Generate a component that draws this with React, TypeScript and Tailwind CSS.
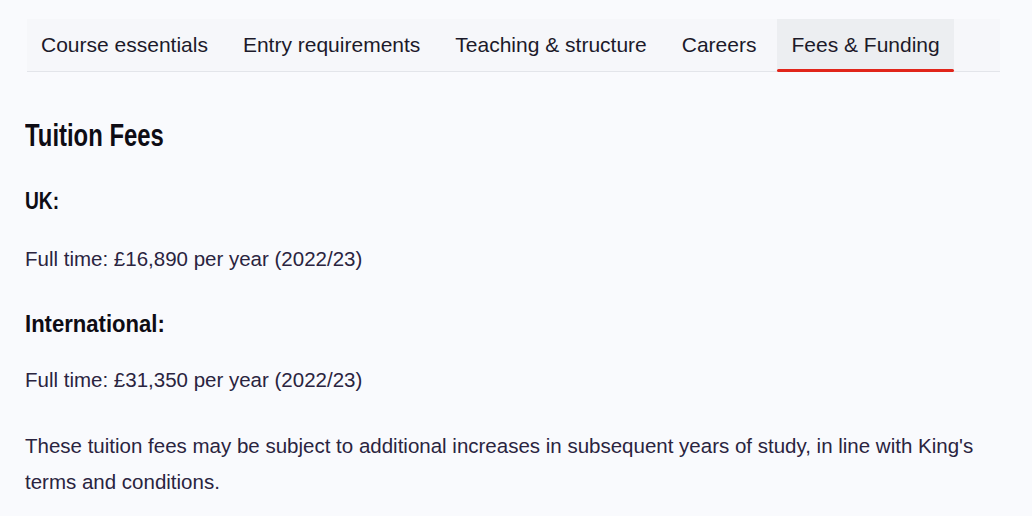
import React from 'react';

const tabs = ['Course essentials', 'Entry requirements', 'Teaching & structure', 'Careers', 'Fees & Funding'];

const body = { fontFamily: '"Liberation Sans", Arial, sans-serif' };

export default function App() {
  const active = 4;

  return (
    <div className="w-[1032px] h-[516px] bg-[#f9fafd] overflow-hidden text-[#2a2440]" style={body}>
      {/* tab bar */}
      <div className="pt-[19px] pl-[27px] pr-[32px]">
        <div className="flex gap-[7px] h-[53px] bg-[#f6f7fa] border-b border-[#e3e5ea]">
          {tabs.map((t, i) => (
            <div
              key={t}
              className={`relative flex items-center px-[14px] text-[21px] text-[#1c1a2a] ${i === active ? 'bg-[#eceef1]' : ''}`}
            >
              {t}
              {i === active && <span className="absolute left-0 right-0 -bottom-px h-[3px] bg-[#e1251b] rounded-full" />}
            </div>
          ))}
        </div>
      </div>

      {/* content */}
      <div className="pl-[25px] pt-[46px] w-[1000px]">
        <h2 className="text-[31px] font-bold leading-[36px] text-[#0e0c14]">
          <span className="inline-block origin-left scale-x-77">Tuition Fees</span>
        </h2>
        <h3 className="mt-[33px] text-[24px] font-bold leading-[28px] text-[#0e0c14]">
          <span className="inline-block origin-left scale-x-80">UK:</span>
        </h3>
        <p className="mt-[30px] text-[20.5px] leading-[28px]">Full time: £16,890 per year (2022/23)</p>
        <h3 className="mt-[37px] text-[24px] font-bold leading-[28px] text-[#0e0c14]">
          <span className="inline-block origin-left scale-x-92">International:</span>
        </h3>
        <p className="mt-[28px] text-[20.5px] leading-[28px]">Full time: £31,350 per year (2022/23)</p>
        <p className="mt-[34px] text-[20.5px] leading-[36px] w-[975px]">
          These tuition fees may be subject to additional increases in subsequent years of study, in line with King's terms and conditions.
        </p>
      </div>
    </div>
  );
}
